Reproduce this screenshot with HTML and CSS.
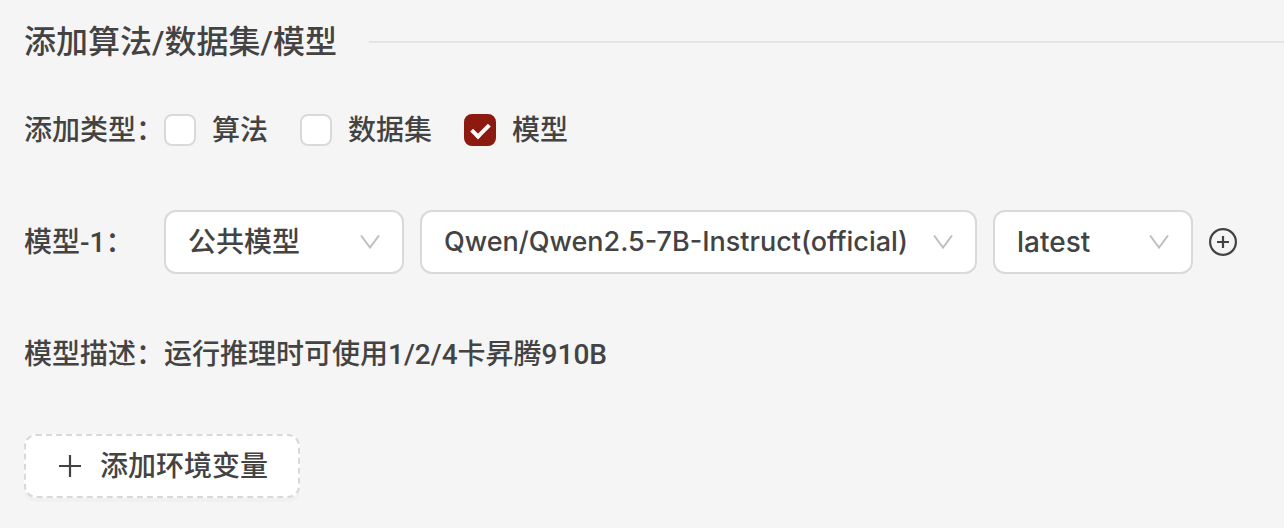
FILE: index.html
```html
<!DOCTYPE html>
<html lang="zh-CN">
<head>
<meta charset="utf-8">
<meta name="viewport" content="width=device-width, initial-scale=1">
<title>添加算法/数据集/模型</title>
<link rel="stylesheet" href="styles.css">
</head>
<body>
<form class="panel">
  <h2 class="divider">添加算法/数据集/模型</h2>

  <div class="row" role="group" aria-labelledby="type-label">
    <span class="label" id="type-label">添加类型：</span>
    <div class="checks">
      <label class="check"><input type="checkbox"><span class="text">算法</span></label>
      <label class="check"><input type="checkbox"><span class="text">数据集</span></label>
      <label class="check"><input type="checkbox" checked><span class="text">模型</span></label>
    </div>
  </div>

  <div class="row">
    <label class="label" for="source">模型-1：</label>
    <div class="fields">
      <div class="select select-source">
        <select id="source"><option>公共模型</option></select>
        <svg class="chevron" viewBox="0 0 20 14" aria-hidden="true"><path d="M1 0.5 10 12.5 19 0.5"/></svg>
      </div>
      <div class="select select-name">
        <select aria-label="模型名称"><option>Qwen/Qwen2.5-7B-Instruct(official)</option></select>
        <svg class="chevron" viewBox="0 0 20 14" aria-hidden="true"><path d="M1 0.5 10 12.5 19 0.5"/></svg>
      </div>
      <div class="select select-version">
        <select aria-label="版本"><option>latest</option></select>
        <svg class="chevron" viewBox="0 0 20 14" aria-hidden="true"><path d="M1 0.5 10 12.5 19 0.5"/></svg>
      </div>
      <button class="icon-button" type="button" aria-label="添加模型">
        <svg viewBox="0 0 28 28" aria-hidden="true"><circle cx="14" cy="14" r="12.9"/><path d="M14 8v12M8 14h12"/></svg>
      </button>
    </div>
  </div>

  <div class="row">
    <span class="label">模型描述：</span>
    <span class="text">运行推理时可使用1/2/4卡昇腾910B</span>
  </div>

  <div class="row">
    <button class="dashed-button" type="button">
      <svg viewBox="0 0 24 24" aria-hidden="true"><path d="M12 1v22M1 12h22"/></svg>
      <span class="text">添加环境变量</span>
    </button>
  </div>
</form>
</body>
</html>
```
FILE: styles.css
```css
*,
*::before,
*::after {
  box-sizing: border-box;
}

body {
  margin: 0;
  background: #f5f5f5;
  color: #434343;
  font-family: Roboto, "Noto Sans CJK SC", sans-serif;
  font-size: 28px;
  font-weight: 500;
  line-height: 44px;
}

.panel {
  display: flex;
  flex-direction: column;
  gap: 48px;
  padding: 16px 0 28px 24px;
}

.divider {
  display: flex;
  align-items: center;
  gap: 32px;
  margin: 0 0 -18px;
  font-size: 32px;
  font-weight: 500;
  line-height: 52px;
}

.divider::after {
  content: "";
  flex: 1;
  border-top: 2px solid #e5e5e5;
}

.row {
  display: flex;
  align-items: center;
  min-height: 64px;
}

.label {
  flex: none;
  width: 140px;
  white-space: nowrap;
}

.label,
.text {
  padding-top: 2px;
}

.checks {
  display: flex;
  flex-wrap: wrap;
  gap: 32px;
}

.check {
  display: flex;
  align-items: center;
  gap: 16px;
}

.check input {
  appearance: none;
  display: grid;
  place-items: center;
  width: 32px;
  height: 32px;
  margin: 0;
  border: 2px solid #d9d9d9;
  border-radius: 8px;
  background: #fff;
}

.check input:checked {
  border-color: #8c1a11;
  background: #8c1a11;
}

.check input:checked::before {
  content: "";
  width: 11px;
  height: 18px;
  border: solid #fff;
  border-width: 0 4px 4px 0;
  transform: translateY(-1px) rotate(45deg);
}

.fields {
  display: flex;
  flex: 1;
  align-items: center;
  gap: 16px;
  padding-right: 40px;
}

.select {
  position: relative;
}

.select-source {
  flex: 0 1 240px;
}

.select-name {
  flex: 0 1 557px;
  font-size: 27px;
}

.select-version {
  flex: 0 1 200px;
}

select {
  appearance: none;
  display: block;
  width: 100%;
  height: 64px;
  padding: 0 48px 0 22px;
  border: 2px solid #d9d9d9;
  border-radius: 12px;
  background: #fff;
  color: inherit;
  font: inherit;
  font-family: Inter, "Noto Sans CJK SC", sans-serif;
}

.chevron {
  position: absolute;
  top: 25px;
  right: 24px;
  width: 20px;
  height: 14px;
  fill: none;
  stroke: #bfbfbf;
  stroke-width: 2;
  pointer-events: none;
}

button {
  color: inherit;
  font: inherit;
}

button svg {
  fill: none;
  stroke: currentColor;
}

.icon-button {
  flex: none;
  display: flex;
  padding: 0;
  border: 0;
  background: none;
}

.icon-button svg {
  width: 28px;
  height: 28px;
  stroke-width: 2.2;
}

.dashed-button {
  display: flex;
  align-items: center;
  gap: 18px;
  height: 64px;
  padding: 0 30px 0 32px;
  border: 2px dashed #d9d9d9;
  border-radius: 12px;
  background: #fff;
  box-shadow: 0 4px 0 rgba(0, 0, 0, 0.02);
}

.dashed-button svg {
  width: 24px;
  height: 24px;
  stroke-width: 2.2;
}
```
